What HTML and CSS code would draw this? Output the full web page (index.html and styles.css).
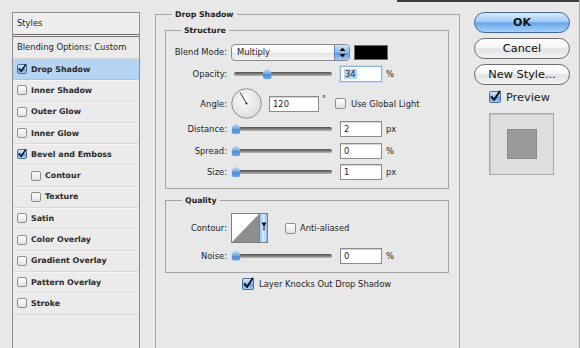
FILE: index.html
```html
<!DOCTYPE html>
<html>
<head>
<meta charset="utf-8">
<link rel="stylesheet" href="styles.css">
</head>
<body>
<div class="window">
  <div class="topline"><div class="edge"></div></div>
  <div class="dialog">
    <div class="styles-panel">
      <div class="panel-head">Styles</div>
      <div class="panel-blend">Blending Options: Custom</div>
      <ul class="fx-list">
        <li class="fx selected"><span class="cb on"><svg viewBox="0 0 10 10"><path d="M1.6 4.8 L4 8 L9.6 -0.5"/></svg></span>Drop Shadow</li>
        <li class="fx"><span class="cb"></span>Inner Shadow</li>
        <li class="fx"><span class="cb"></span>Outer Glow</li>
        <li class="fx"><span class="cb"></span>Inner Glow</li>
        <li class="fx"><span class="cb on"><svg viewBox="0 0 10 10"><path d="M1.6 4.8 L4 8 L9.6 -0.5"/></svg></span>Bevel and Emboss</li>
        <li class="fx sub"><span class="cb"></span>Contour</li>
        <li class="fx sub"><span class="cb"></span>Texture</li>
        <li class="fx"><span class="cb"></span>Satin</li>
        <li class="fx"><span class="cb"></span>Color Overlay</li>
        <li class="fx"><span class="cb"></span>Gradient Overlay</li>
        <li class="fx"><span class="cb"></span>Pattern Overlay</li>
        <li class="fx"><span class="cb"></span>Stroke</li>
      </ul>
    </div>

    <div class="main">
      <fieldset class="group outer">
        <legend>Drop Shadow</legend>
        <fieldset class="group structure">
          <legend>Structure</legend>
          <div class="row r-blend">
            <span class="lbl">Blend Mode:</span>
            <div class="select">
              <span class="select-text">Multiply</span>
              <span class="select-arrows"><svg width="7" height="11" viewBox="0 0 7 11"><path d="M3.5 0.5 L6.5 4 H0.5 Z M3.5 10.5 L6.5 7 H0.5 Z"/></svg></span>
            </div>
            <span class="swatch"></span>
          </div>
          <div class="row r-opacity">
            <span class="lbl">Opacity:</span>
            <div class="slider"><span class="thumb" style="--v:34"></span></div>
            <span class="field focus"><span class="sel">34</span></span>
            <span class="unit">%</span>
          </div>
          <div class="row r-angle">
            <span class="lbl">Angle:</span>
            <svg class="dial" width="31" height="31" viewBox="0 0 31 31">
              <defs><radialGradient id="dg" cx="45%" cy="40%" r="65%"><stop offset="0" stop-color="#fbfbfb"/><stop offset="1" stop-color="#dadada"/></radialGradient></defs>
              <circle cx="15.5" cy="15.5" r="14.8" fill="url(#dg)" stroke="#8d8d8d" stroke-width="1"/>
              <line x1="15.5" y1="15.5" x2="9.2" y2="4.6" stroke="#333" stroke-width="1"/>
              <circle cx="15.5" cy="15.5" r="1.1" fill="#333"/>
            </svg>
            <span class="field angle">120</span>
            <span class="deg">°</span>
            <span class="cb mid"></span>
            <span class="cb-text">Use Global Light</span>
          </div>
          <div class="row r-distance">
            <span class="lbl">Distance:</span>
            <div class="slider"><span class="thumb" style="--v:0"></span></div>
            <span class="field">2</span>
            <span class="unit">px</span>
          </div>
          <div class="row r-spread">
            <span class="lbl">Spread:</span>
            <div class="slider"><span class="thumb" style="--v:0"></span></div>
            <span class="field">0</span>
            <span class="unit">%</span>
          </div>
          <div class="row r-size">
            <span class="lbl">Size:</span>
            <div class="slider"><span class="thumb" style="--v:0"></span></div>
            <span class="field">1</span>
            <span class="unit">px</span>
          </div>
        </fieldset>

        <fieldset class="group quality">
          <legend>Quality</legend>
          <div class="row r-contour">
            <span class="lbl">Contour:</span>
            <div class="contour">
              <svg class="contour-curve" width="27" height="28" viewBox="0 0 27 28"><rect width="27" height="28" fill="#fff"/><path d="M0 28 L27 0 V28 Z" fill="#8e8e8e"/></svg>
              <span class="contour-arrow"><svg width="6" height="9" viewBox="0 0 6 9"><path d="M0.5 0.5 H5.5 L3 5 Z M2.5 4 H3.5 V8.5 H2.5 Z"/></svg></span>
            </div>
            <span class="cb mid aa"></span>
            <span class="cb-text">Anti-aliased</span>
          </div>
          <div class="row r-noise">
            <span class="lbl">Noise:</span>
            <div class="slider"><span class="thumb" style="--v:0"></span></div>
            <span class="field">0</span>
            <span class="unit">%</span>
          </div>
        </fieldset>

        <div class="row knock">
          <span class="cb big on"><svg viewBox="0 0 10 10"><path d="M1.6 4.8 L4 8 L9.6 -0.5"/></svg></span>
          <span class="cb-text">Layer Knocks Out Drop Shadow</span>
        </div>
      </fieldset>
    </div>

    <div class="actions">
      <div class="btn primary">OK</div>
      <div class="btn">Cancel</div>
      <div class="btn">New Style...</div>
      <div class="preview-row">
        <span class="cb big on"><svg viewBox="0 0 10 10"><path d="M1.6 4.8 L4 8 L9.6 -0.5"/></svg></span>
        <span class="preview-label">Preview</span>
      </div>
      <div class="preview-box"><div class="preview-square"></div></div>
    </div>
  </div>
</div>
</body>
</html>
```

FILE: styles.css
```css
* { box-sizing: border-box; }
html, body { margin: 0; padding: 0; }
body {
  width: 580px;
  height: 348px;
  overflow: hidden;
  background: #e8e8e8;
  font-family: "DejaVu Sans", sans-serif;
  font-size: 8.4px;
  color: #1e1e1e;
}
.window {
  height: 348px;
  border-right: 1px solid #a9a9a9;
  display: flex;
  flex-direction: column;
}
.topline { height: 2px; display: flex; flex: none; }
.topline .edge { margin-left: 397px; width: 182px; background: #3c3c3c; }
.dialog { display: flex; align-items: flex-start; padding-left: 12px; }

/* ---------- left list ---------- */
.styles-panel {
  margin-top: 10px;
  width: 128px;
  height: 345px;
  border: 1px solid #8f8f8f;
  background: #ebebeb;
  flex: none;
}
.panel-head {
  height: 24px;
  padding-left: 4px;
  line-height: 21px;
  border-bottom: 3px double #6e6e6e;
  background: #eeeeee;
}
.panel-blend {
  height: 22px;
  padding-left: 4px;
  line-height: 21px;
  border-bottom: 1px solid #d3d3d3;
}
.fx-list { list-style: none; margin: 0; padding: 0; }
.fx {
  height: 21.3px;
  display: flex;
  align-items: center;
  padding-left: 4px;
  border-bottom: 1px solid #d9d9d9;
  box-shadow: inset 0 1px 0 #f5f5f5;
  font-weight: bold;
  font-size: 7.9px;
  color: #2a2a2a;
}
.fx.sub { padding-left: 18px; }
.fx.selected { background: #b6d4f3; box-shadow: none; border-bottom-color: #a9c4e2; }

/* ---------- checkboxes ---------- */
.cb {
  width: 10px;
  height: 10px;
  flex: none;
  margin-right: 4px;
  border: 1px solid #8e8e8e;
  border-radius: 2px;
  background: linear-gradient(#ffffff, #e2e2e2);
  position: relative;
  display: inline-block;
}
.cb.on {
  border-color: #4d6e9c;
  background: linear-gradient(#d9eafc, #8dbbec 50%, #5f9be0 55%, #a8d0f6);
}
.cb svg {
  position: absolute;
  left: 0;
  top: 0;
  width: 100%;
  height: 100%;
  overflow: visible;
}
.cb svg path { fill: none; stroke: #111; stroke-width: 1.9; stroke-linecap: round; stroke-linejoin: round; }
.cb.mid { width: 11px; height: 11px; }
.cb.big { width: 12px; height: 12px; }

/* ---------- fieldsets ---------- */
.main { margin-left: 15px; margin-top: 6.5px; width: 305px; flex: none; }
.group {
  margin: 0;
  border: 1px solid #a4a4a4;
  min-width: 0;
}
.group legend {
  padding: 0 3px;
  font-weight: bold;
  font-size: 7.8px;
  line-height: 11px;
  color: #222;
}
.outer { height: 350px; padding: 5px 10px 0 9px; }
.outer > legend { margin-left: 7px; }
.structure { padding: 7.5px 0 7px 0; }
.structure > legend { margin-left: 15px; }
.quality { margin-top: 5.5px; padding: 7.5px 0 8px 0; }
.quality > legend { margin-left: 16px; }

.row { display: flex; align-items: center; height: 18px; }
.lbl { width: 61px; text-align: right; margin-right: 4px; flex: none; }
.r-opacity { margin-top: 4px; }
.r-angle { margin-top: 5px; height: 31px; }
.r-distance { margin-top: 1px; }
.r-spread { margin-top: 4px; }
.r-size { margin-top: 3px; }
.r-contour { height: 30px; }
.r-noise { margin-top: 4px; height: 17px; }
.knock { margin-top: 4px; height: 14px; padding-left: 77px; }
.knock .cb { margin-right: 5px; }

/* select */
.select {
  width: 119px;
  height: 17px;
  border: 1px solid #8a8a8a;
  border-radius: 4px;
  background: linear-gradient(#ffffff, #f4f4f4 50%, #e6e6e6 52%, #f2f2f2);
  display: flex;
  overflow: hidden;
}
.select-text { flex: 1; padding-left: 5px; line-height: 15px; }
.select-arrows {
  width: 15px;
  border-left: 1px solid #5d86bf;
  background: linear-gradient(#cfe4fb, #86b6ea 50%, #5b98de 55%, #a5cdf5);
  display: flex;
  align-items: center;
  justify-content: center;
}
.select-arrows path { fill: #111; }
.swatch {
  width: 34px;
  height: 15px;
  margin-left: 4px;
  background: #000;
  border: 1px solid #6a6a6a;
}

/* slider */
.slider {
  position: relative;
  width: 100px;
  height: 12px;
  margin-left: 1px;
  flex: none;
}
.slider::before {
  content: "";
  position: absolute;
  left: 2px;
  right: 0;
  top: 4px;
  height: 4px;
  border-radius: 2px;
  background: linear-gradient(#4e4e4e, #8a8a8a 60%, #b8b8b8);
}
.thumb {
  position: absolute;
  top: 0;
  left: calc(4px + 0.92px * var(--v));
  transform: translateX(-50%);
  width: 9px;
  height: 11px;
  background: linear-gradient(#d8eafc, #7fb2e8 45%, #4f8ed8 60%, #6aa7e8);
  clip-path: polygon(50% 0, 100% 38%, 100% 85%, 85% 100%, 15% 100%, 0 85%, 0 38%);
}

/* inputs */
.field {
  width: 42px;
  height: 16px;
  margin-left: 8px;
  border: 1px solid #8c8c8c;
  background: #fff;
  box-shadow: inset 0 1px 1px rgba(0,0,0,0.18);
  padding-left: 3px;
  line-height: 14px;
  flex: none;
}
.field.focus { border-color: #8fb2da; box-shadow: 0 0 0 1px #c5daf2; }
.field .sel { background: #b5d3f6; padding: 0 1px; }
.unit { margin-left: 4px; }
.dial { flex: none; }
.field.angle { width: 50px; margin-left: 7px; }
.deg { margin-left: 3px; font-size: 8px; align-self: flex-start; margin-top: 7px; }
.r-angle .cb { margin-left: 9px; margin-right: 5px; }
.cb-text { white-space: nowrap; }

/* contour */
.contour {
  width: 37px;
  height: 30px;
  border: 1px solid #7e7e7e;
  display: flex;
  flex: none;
}
.contour-curve { display: block; }
.contour-arrow {
  flex: 1;
  border-left: 1px solid #5d86bf;
  background: linear-gradient(90deg, #9cc6f2, #d8ebfd 50%, #8fbdee);
  display: flex;
  justify-content: center;
  padding-top: 8px;
}
.contour-arrow path { fill: #111; }
.aa { margin-left: 17px; margin-right: 4px; }

/* ---------- right column ---------- */
.actions { margin-left: 14px; margin-top: 10px; width: 96px; flex: none; }
.btn {
  height: 21px;
  margin-bottom: 5px;
  border: 1px solid #6b6b6b;
  border-radius: 11px;
  background: linear-gradient(#ffffff, #f5f5f5 45%, #e2e2e2 52%, #f4f4f4);
  text-align: center;
  line-height: 19px;
  font-size: 11.3px;
  color: #111;
}
.btn.primary {
  border-color: #44679a;
  background: linear-gradient(#d9ebfd, #a3cbf4 45%, #6aa6ea 52%, #a5d1fb);
  font-weight: bold;
  font-size: 11px;
}
.preview-row {
  display: flex;
  align-items: center;
  height: 14px;
  margin-top: 2px;
  padding-left: 15px;
}
.preview-row .cb { margin-right: 5px; }
.preview-label { font-size: 11.3px; }
.preview-box {
  margin-top: 9px;
  margin-left: 15px;
  width: 65px;
  height: 62px;
  border: 1px solid #a8a8a8;
  background: #dedede;
  box-shadow: inset 1px 1px 0 #c4c4c4;
  display: flex;
  align-items: center;
  justify-content: center;
}
.preview-square {
  width: 30px;
  height: 30px;
  background: #9a9a9a;
  border: 1px solid #8a8a8a;
}
```
